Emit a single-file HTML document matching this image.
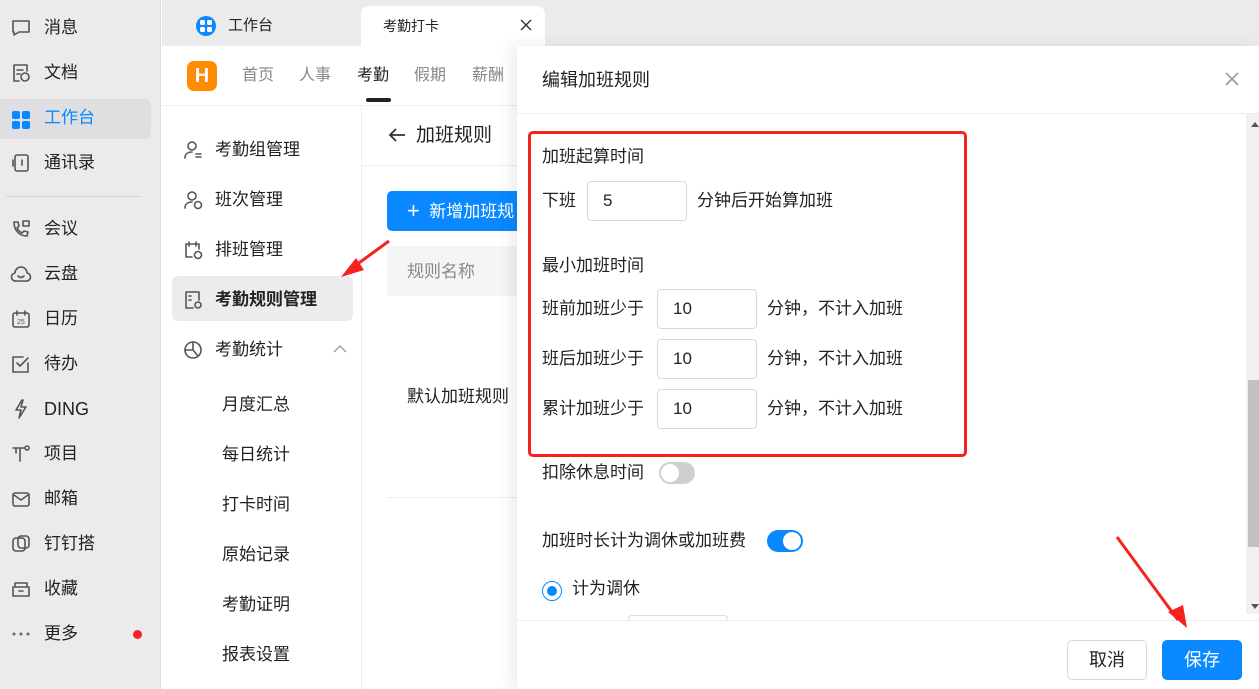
<!DOCTYPE html>
<html><head><meta charset="utf-8">
<style>
*{margin:0;padding:0;box-sizing:border-box}
body{width:1259px;height:689px;overflow:hidden;position:relative;background:#fff;font-family:"Liberation Sans","Noto Sans CJK SC",sans-serif;color:#222;font-size:17px}
.a{position:absolute;white-space:nowrap;line-height:24px}
svg.i{position:absolute;width:22px;height:22px;fill:none;stroke:#555;stroke-width:1.6;stroke-linecap:round;stroke-linejoin:round}
.inp{position:absolute;border:1px solid #d9d9d9;border-radius:4px;background:#fff;padding-left:15px;font-size:17px;line-height:38px;height:40px;width:100px}
</style></head><body>
<div class="a" style="left:0;top:0;width:161px;height:689px;background:#ebebeb;border-right:1px solid #ddd"></div>
<div class="a" style="left:0;top:99px;width:151px;height:40px;background:#dfdfe1;border-radius:0 6px 6px 0"></div>
<div class="a" style="left:6px;top:196px;width:135px;height:1px;background:#d6d6d6"></div>

<svg class="i" style="left:10px;top:17px" viewBox="0 0 22 22"><path d="M3 4h16v11H9l-5 3v-3H3z"/></svg>
<div class="a" style="left:44px;top:16px">消息</div>
<svg class="i" style="left:10px;top:62px" viewBox="0 0 22 22"><path d="M17 9V3H4v16h5M7 8h6M7 12h3"/><circle cx="15" cy="15" r="4"/></svg>
<div class="a" style="left:44px;top:61px">文档</div>
<svg style="position:absolute;left:12px;top:111px;width:18px;height:18px" viewBox="0 0 18 18"><rect x="0" y="0" width="8" height="8" rx="2" fill="#0a88ff"/><rect x="10" y="0" width="8" height="8" rx="2" fill="#0a88ff"/><rect x="0" y="10" width="8" height="8" rx="2" fill="#0a88ff"/><rect x="10" y="10" width="8" height="8" rx="2" fill="#0a88ff"/></svg>
<div class="a" style="left:44px;top:106px;color:#0a88ff">工作台</div>
<svg class="i" style="left:10px;top:152px" viewBox="0 0 22 22"><rect x="5" y="3" width="13" height="16" rx="2"/><path d="M3 8v6M12 8v5"/></svg>
<div class="a" style="left:44px;top:151px">通讯录</div>

<svg class="i" style="left:10px;top:218px" viewBox="0 0 22 22"><path d="M4 4c0 8 5 14 13 14l1-4-4-1-2 2c-2-1-4-3-5-5l2-2-1-4z"/><rect x="13" y="3" width="6" height="5"/></svg>
<div class="a" style="left:44px;top:217px">会议</div>
<svg class="i" style="left:10px;top:263px" viewBox="0 0 22 22"><path d="M6 18h10a4 4 0 0 0 1-8 6 6 0 0 0-12 0 4 4 0 0 0 1 8zM8 13c2 2 4 2 6 0"/></svg>
<div class="a" style="left:44px;top:262px">云盘</div>
<svg class="i" style="left:10px;top:308px" viewBox="0 0 22 22"><rect x="3" y="5" width="16" height="14" rx="2"/><path d="M7 3v4M15 3v4"/><text x="7" y="16" font-size="7" fill="#555" stroke="none">25</text></svg>
<div class="a" style="left:44px;top:307px">日历</div>
<svg class="i" style="left:10px;top:353px" viewBox="0 0 22 22"><path d="M18 10v9H3V4h10M7 10l3 3 8-8"/></svg>
<div class="a" style="left:44px;top:352px">待办</div>
<svg class="i" style="left:10px;top:398px" viewBox="0 0 22 22"><path d="M12 2L6 12h5l-2 8 7-11h-5l2-7z"/></svg>
<div class="a" style="left:44px;top:397px;font-size:18px">DING</div>
<svg class="i" style="left:10px;top:443px" viewBox="0 0 22 22"><path d="M3 5h11M6 5v5M10 5v13"/><circle cx="17" cy="5" r="2"/></svg>
<div class="a" style="left:44px;top:442px">项目</div>
<svg class="i" style="left:10px;top:488px" viewBox="0 0 22 22"><rect x="3" y="5" width="16" height="13" rx="2"/><path d="M4 7l7 5 7-5"/></svg>
<div class="a" style="left:44px;top:487px">邮箱</div>
<svg class="i" style="left:10px;top:533px" viewBox="0 0 22 22"><rect x="3" y="5" width="12" height="13" rx="3"/><rect x="8" y="3" width="11" height="12" rx="3"/></svg>
<div class="a" style="left:44px;top:532px">钉钉搭</div>
<svg class="i" style="left:10px;top:578px" viewBox="0 0 22 22"><path d="M3 9h16v9H3zM5 9V5h12v4M9 13h4"/></svg>
<div class="a" style="left:44px;top:577px">收藏</div>
<svg style="position:absolute;left:12px;top:632px;width:18px;height:4px" viewBox="0 0 18 4"><circle cx="2" cy="2" r="1.5" fill="#666"/><circle cx="9" cy="2" r="1.5" fill="#666"/><circle cx="16" cy="2" r="1.5" fill="#666"/></svg>
<div class="a" style="left:44px;top:622px">更多</div>
<div class="a" style="left:133px;top:630px;width:9px;height:9px;border-radius:50%;background:#f5222d"></div>

<div class="a" style="left:162px;top:0;width:1097px;height:46px;background:#ebebeb"></div>
<div class="a" style="left:361px;top:6px;width:184px;height:40px;background:#fff;border-radius:8px 8px 0 0"></div>
<div class="a" style="left:196px;top:16px;width:20px;height:20px;border-radius:50%;background:#0a88ff"></div>
<svg style="position:absolute;left:200px;top:20px;width:12px;height:12px" viewBox="0 0 12 12"><rect x="0" y="0" width="5" height="5" rx="1.5" fill="#fff"/><rect x="7" y="0" width="5" height="5" rx="1.5" fill="#fff"/><rect x="0" y="7" width="5" height="5" rx="1.5" fill="#fff"/><rect x="7" y="7" width="5" height="5" rx="1.5" fill="#fff"/></svg>
<div class="a" style="left:228px;top:14px;font-size:15px">工作台</div>
<div class="a" style="left:383px;top:14px;font-size:14px">考勤打卡</div>
<svg style="position:absolute;left:520px;top:19px;width:12px;height:12px" viewBox="0 0 12 12"><path d="M1 1l10 10M11 1L1 11" stroke="#333" stroke-width="1.4"/></svg>

<div class="a" style="left:162px;top:105px;width:355px;height:1px;background:#eee"></div>
<div class="a" style="left:187px;top:61px;width:30px;height:30px;border-radius:7px;background:#ff8c00;color:#fff;font-weight:bold;font-size:20px;text-align:center;line-height:30px">H</div>
<div class="a" style="left:242px;top:64px;font-size:16px;color:#888">首页</div>
<div class="a" style="left:299px;top:64px;font-size:16px;color:#888">人事</div>
<div class="a" style="left:357px;top:64px;font-size:16px;color:#222">考勤</div>
<div class="a" style="left:366px;top:98px;width:25px;height:4px;border-radius:2px;background:#222"></div>
<div class="a" style="left:414px;top:64px;font-size:16px;color:#888">假期</div>
<div class="a" style="left:472px;top:64px;font-size:16px;color:#888">薪酬</div>

<div class="a" style="left:361px;top:106px;width:1px;height:583px;background:#eee"></div>
<div class="a" style="left:172px;top:276px;width:181px;height:45px;background:#ececee;border-radius:6px"></div>
<svg class="i" style="left:182px;top:139px" viewBox="0 0 22 22"><circle cx="10" cy="7" r="4"/><path d="M3 19c0-4 3-6 7-6M14 15h5M14 18h5"/></svg>
<div class="a" style="left:215px;top:138px">考勤组管理</div>
<svg class="i" style="left:182px;top:189px" viewBox="0 0 22 22"><circle cx="10" cy="7" r="4"/><path d="M3 19c0-4 3-6 7-6"/><circle cx="16" cy="16" r="3.5"/></svg>
<div class="a" style="left:215px;top:188px">班次管理</div>
<svg class="i" style="left:182px;top:239px" viewBox="0 0 22 22"><path d="M10 18H4V5h13v5M7 3v4M14 3v4"/><circle cx="16" cy="16" r="3.5"/></svg>
<div class="a" style="left:215px;top:238px">排班管理</div>
<svg class="i" style="left:182px;top:289px" viewBox="0 0 22 22"><path d="M11 19H4V3h13v8M7 7h2M7 11h2"/><circle cx="16" cy="16" r="3"/></svg>
<div class="a" style="left:215px;top:288px;font-weight:bold">考勤规则管理</div>
<svg class="i" style="left:182px;top:339px" viewBox="0 0 22 22"><circle cx="11" cy="11" r="8"/><path d="M11 3v8H3M11 11l5 6"/></svg>
<div class="a" style="left:215px;top:338px">考勤统计</div>
<svg style="position:absolute;left:333px;top:344px;width:14px;height:10px" viewBox="0 0 14 10"><path d="M1 8l6-6 6 6" fill="none" stroke="#999" stroke-width="1.3"/></svg>
<div class="a" style="left:222px;top:393px">月度汇总</div>
<div class="a" style="left:222px;top:443px">每日统计</div>
<div class="a" style="left:222px;top:493px">打卡时间</div>
<div class="a" style="left:222px;top:543px">原始记录</div>
<div class="a" style="left:222px;top:593px">考勤证明</div>
<div class="a" style="left:222px;top:643px">报表设置</div>

<div class="a" style="left:362px;top:165px;width:160px;height:1px;background:#eee"></div>
<svg style="position:absolute;left:388px;top:127px;width:18px;height:16px" viewBox="0 0 18 16"><path d="M17 8H2M8 2L2 8l6 6" fill="none" stroke="#333" stroke-width="1.8"/></svg>
<div class="a" style="left:416px;top:124px;font-size:19px">加班规则</div>
<div class="a" style="left:387px;top:191px;width:140px;height:40px;background:#0a88ff;border-radius:5px;color:#fff;padding-left:20px;line-height:40px;font-size:17px"><span style="font-size:22px;vertical-align:-1px">+</span>&nbsp; 新增加班规</div>
<div class="a" style="left:387px;top:246px;width:140px;height:50px;background:#f5f5f5"></div>
<div class="a" style="left:407px;top:260px;color:#888">规则名称</div>
<div class="a" style="left:407px;top:385px">默认加班规则</div>
<div class="a" style="left:387px;top:497px;width:140px;height:1px;background:#eee"></div>

<div class="a" style="left:517px;top:46px;width:742px;height:643px;background:#fff;box-shadow:-6px 0 14px rgba(0,0,0,0.08)"></div>
<div class="a" style="left:517px;top:113px;width:742px;height:1px;background:#eee"></div>
<div class="a" style="left:542px;top:68px;font-size:18px">编辑加班规则</div>
<svg style="position:absolute;left:1224px;top:71px;width:16px;height:16px" viewBox="0 0 16 16"><path d="M2 2l12 12M14 2L2 14" stroke="#999" stroke-width="1.6"/></svg>
<div class="a" style="left:1246px;top:114px;width:13px;height:500px;background:#f1f1f1"></div>
<div class="a" style="left:1248px;top:380px;width:11px;height:167px;background:#c1c1c1"></div>
<div class="a" style="left:1251px;top:122px;width:0;height:0;border-left:4px solid transparent;border-right:4px solid transparent;border-bottom:5px solid #555"></div>
<div class="a" style="left:1251px;top:604px;width:0;height:0;border-left:4px solid transparent;border-right:4px solid transparent;border-top:5px solid #555"></div>

<div class="a" style="left:528px;top:131px;width:439px;height:326px;border:3px solid #f5221d;border-radius:5px"></div>
<div class="a" style="left:542px;top:145px">加班起算时间</div>
<div class="a" style="left:542px;top:189px">下班</div>
<div class="inp" style="left:587px;top:181px">5</div>
<div class="a" style="left:697px;top:189px">分钟后开始算加班</div>
<div class="a" style="left:542px;top:254px">最小加班时间</div>
<div class="a" style="left:542px;top:297px">班前加班少于</div>
<div class="inp" style="left:657px;top:289px">10</div>
<div class="a" style="left:767px;top:297px">分钟，不计入加班</div>
<div class="a" style="left:542px;top:347px">班后加班少于</div>
<div class="inp" style="left:657px;top:339px">10</div>
<div class="a" style="left:767px;top:347px">分钟，不计入加班</div>
<div class="a" style="left:542px;top:397px">累计加班少于</div>
<div class="inp" style="left:657px;top:389px">10</div>
<div class="a" style="left:767px;top:397px">分钟，不计入加班</div>

<div class="a" style="left:542px;top:461px">扣除休息时间</div>
<div class="a" style="left:659px;top:462px;width:36px;height:22px;border-radius:11px;background:#cfcfcf"></div>
<div class="a" style="left:661px;top:464px;width:18px;height:18px;border-radius:50%;background:#fff"></div>
<div class="a" style="left:542px;top:529px">加班时长计为调休或加班费</div>
<div class="a" style="left:767px;top:530px;width:36px;height:22px;border-radius:11px;background:#0a88ff"></div>
<div class="a" style="left:783px;top:532px;width:18px;height:18px;border-radius:50%;background:#fff"></div>
<div class="a" style="left:542px;top:581px;width:20px;height:20px;border-radius:50%;border:1.5px solid #0a88ff"></div>
<div class="a" style="left:547px;top:586px;width:10px;height:10px;border-radius:50%;background:#0a88ff"></div>
<div class="a" style="left:572px;top:577px">计为调休</div>
<div class="a" style="left:628px;top:615px;width:100px;height:20px;border:1px solid #ddd;border-radius:4px"></div>

<div class="a" style="left:517px;top:620px;width:742px;height:69px;background:#fff;border-top:1px solid #eee"></div>
<div class="a" style="left:1067px;top:640px;width:80px;height:40px;border:1px solid #d9d9d9;border-radius:5px;text-align:center;line-height:38px;font-size:18px">取消</div>
<div class="a" style="left:1162px;top:640px;width:80px;height:40px;background:#0a88ff;border-radius:5px;text-align:center;line-height:40px;font-size:18px;color:#fff">保存</div>

<svg style="position:absolute;left:0;top:0;width:1259px;height:689px;pointer-events:none" viewBox="0 0 1259 689">
<path d="M389 241L352 268" stroke="#f5221d" stroke-width="3"/>
<path d="M341 277L356 258 364 270z" fill="#f5221d"/>
<path d="M1117 537L1178 620" stroke="#f5221d" stroke-width="3"/>
<path d="M1187 628L1168 612 1183 605z" fill="#f5221d"/>
</svg>
</body></html>
